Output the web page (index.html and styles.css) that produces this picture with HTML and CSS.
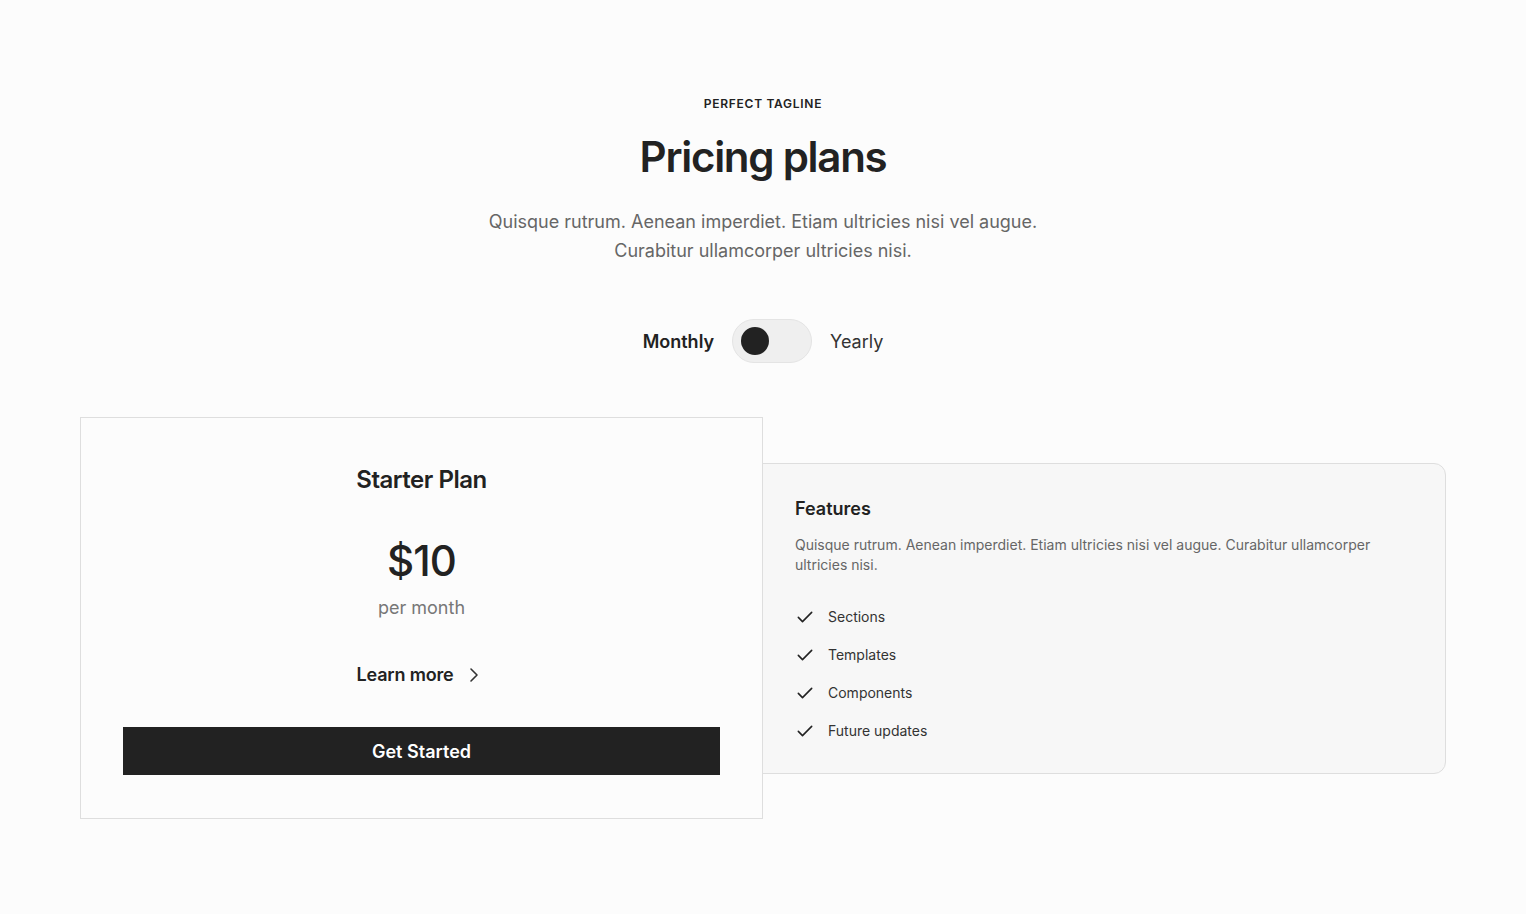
FILE: index.html
```html
<!DOCTYPE html>
<html lang="en">
<head>
<meta charset="utf-8">
<title>Pricing plans</title>
<link rel="stylesheet" href="styles.css">
</head>
<body>
<section class="pricing">
  <header class="intro">
    <p class="tagline">PERFECT TAGLINE</p>
    <h1 class="title">Pricing plans</h1>
    <p class="lead">Quisque rutrum. Aenean imperdiet. Etiam ultricies nisi vel augue.<br>Curabitur ullamcorper ultricies nisi.</p>
  </header>

  <div class="switcher">
    <span class="switch-label active">Monthly</span>
    <span class="toggle"><span class="knob"></span></span>
    <span class="switch-label">Yearly</span>
  </div>

  <div class="plans">
    <article class="plan">
      <h2 class="plan-name">Starter Plan</h2>
      <div class="price">$10</div>
      <div class="period">per month</div>
      <a class="learn" href="#">Learn more
        <svg class="chev" width="24" height="24" viewBox="0 0 24 24" fill="none" stroke="currentColor" stroke-width="1.6" stroke-linecap="round" stroke-linejoin="round"><path d="M9 6l6 6-6 6"/></svg>
      </a>
      <button class="cta">Get Started</button>
    </article>

    <aside class="features">
      <h3 class="features-title">Features</h3>
      <p class="features-desc">Quisque rutrum. Aenean imperdiet. Etiam ultricies nisi vel augue. Curabitur ullamcorper ultricies nisi.</p>
      <ul class="feature-list">
        <li><svg class="check" width="20" height="20" viewBox="0 0 24 24" fill="none" stroke="currentColor" stroke-width="1.9" stroke-linecap="round" stroke-linejoin="round"><path d="M4 12.5l5 5L20 6.5"/></svg>Sections</li>
        <li><svg class="check" width="20" height="20" viewBox="0 0 24 24" fill="none" stroke="currentColor" stroke-width="1.9" stroke-linecap="round" stroke-linejoin="round"><path d="M4 12.5l5 5L20 6.5"/></svg>Templates</li>
        <li><svg class="check" width="20" height="20" viewBox="0 0 24 24" fill="none" stroke="currentColor" stroke-width="1.9" stroke-linecap="round" stroke-linejoin="round"><path d="M4 12.5l5 5L20 6.5"/></svg>Components</li>
        <li><svg class="check" width="20" height="20" viewBox="0 0 24 24" fill="none" stroke="currentColor" stroke-width="1.9" stroke-linecap="round" stroke-linejoin="round"><path d="M4 12.5l5 5L20 6.5"/></svg>Future updates</li>
      </ul>
    </aside>
  </div>
</section>
</body>
</html>
```

FILE: styles.css
```css
* { box-sizing: border-box; }

html, body {
  margin: 0;
  padding: 0;
  background: #fcfcfc;
  color: #222222;
  font-family: Inter, "Noto Sans", "Liberation Sans", sans-serif;
}

.pricing {
  width: 1366px;
  margin: 0 auto;
  padding-top: 96px;
}

.intro {
  text-align: center;
}

.tagline {
  margin: 0;
  font-size: 12px;
  line-height: 16px;
  font-weight: 600;
  letter-spacing: 0.06em;
  color: #222;
}

.title {
  margin: 19px 0 0;
  font-size: 42px;
  line-height: 52px;
  font-weight: 600;
  letter-spacing: -0.03em;
  color: #222;
}

.lead {
  margin: 24px 0 0;
  font-size: 18px;
  line-height: 29px;
  color: #666;
}

.switcher {
  display: flex;
  justify-content: center;
  align-items: center;
  gap: 18px;
  margin-top: 54px;
  height: 44px;
}

.switch-label {
  font-size: 18px;
  color: #333;
}

.switch-label.active {
  font-weight: 600;
  color: #222;
}

.toggle {
  display: flex;
  align-items: center;
  width: 80px;
  height: 44px;
  padding: 0 8px;
  border: 1px solid #e4e4e4;
  border-radius: 22px;
  background: #efefef;
}

.knob {
  width: 28px;
  height: 28px;
  border-radius: 50%;
  background: #222;
}

.plans {
  display: grid;
  grid-template-columns: 683px 683px;
  align-items: center;
  margin-top: 54px;
}

.plan {
  position: relative;
  z-index: 1;
  display: flex;
  flex-direction: column;
  align-items: center;
  padding: 46px 42px 43px;
  border: 1px solid #dedede;
  background: #fcfcfc;
}

.plan-name {
  margin: 0;
  font-size: 24px;
  line-height: 32px;
  font-weight: 600;
  letter-spacing: -0.02em;
}

.price {
  margin-top: 40px;
  font-size: 42px;
  line-height: 50px;
  font-weight: 500;
  letter-spacing: -0.02em;
}

.period {
  margin-top: 9px;
  font-size: 18px;
  line-height: 26px;
  color: #777;
}

.learn {
  display: flex;
  align-items: center;
  gap: 9px;
  margin-top: 40px;
  font-size: 18px;
  line-height: 28px;
  font-weight: 600;
  letter-spacing: -0.01em;
  color: #222;
  text-decoration: none;
}

.chev { color: #333; }

.cta {
  margin-top: 38px;
  width: 100%;
  height: 48px;
  border: 0;
  background: #222;
  color: #fff;
  font-family: inherit;
  font-size: 18px;
  font-weight: 600;
}

.features {
  margin-left: -1px;
  padding: 32px 32px 32px;
  border: 1px solid #dedede;
  border-radius: 0 12px 12px 0;
  background: #f7f7f7;
}

.features-title {
  margin: 0;
  font-size: 18px;
  line-height: 26px;
  font-weight: 600;
}

.features-desc {
  margin: 13px 0 0;
  font-size: 14px;
  line-height: 20px;
  color: #666;
}

.feature-list {
  list-style: none;
  margin: 32px 0 0;
  padding: 0;
}

.feature-list li {
  display: flex;
  align-items: center;
  gap: 13px;
  height: 20px;
  font-size: 14px;
  color: #333;
}

.feature-list li + li {
  margin-top: 18px;
}

.check {
  flex: none;
  color: #222;
}
```
